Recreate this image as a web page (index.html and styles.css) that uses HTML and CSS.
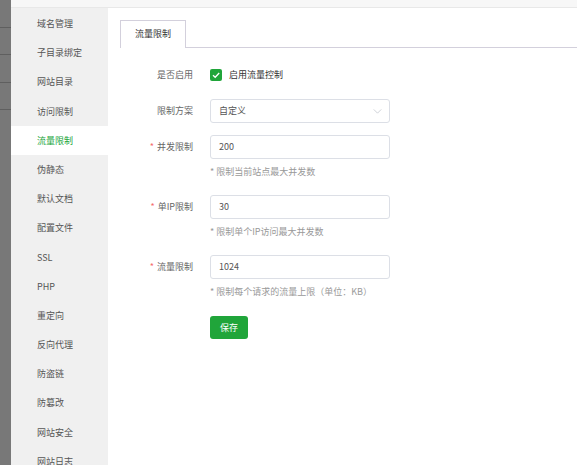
FILE: index.html
```html
<!DOCTYPE html>
<html lang="zh">
<head>
<meta charset="utf-8">
<link rel="stylesheet" href="styles.css">
</head>
<body>
<div class="app">
  <div class="strip">
    <div class="strip-cell"></div>
    <div class="strip-cell"></div>
    <div class="strip-cell"></div>
    <div class="strip-cell"></div>
  </div>
  <div class="main">
    <div class="topbar"></div>
    <div class="body">
      <ul class="sidebar">
        <li>域名管理</li>
        <li>子目录绑定</li>
        <li>网站目录</li>
        <li>访问限制</li>
        <li class="active">流量限制</li>
        <li>伪静态</li>
        <li>默认文档</li>
        <li>配置文件</li>
        <li>SSL</li>
        <li>PHP</li>
        <li>重定向</li>
        <li>反向代理</li>
        <li>防盗链</li>
        <li>防篡改</li>
        <li>网站安全</li>
        <li>网站日志</li>
      </ul>
      <div class="content">
        <div class="tabs">
          <div class="tab">流量限制</div>
        </div>
        <div class="form">
          <div class="label row-check">是否启用</div>
          <div class="field row-check">
            <span class="checkbox"><svg viewBox="0 0 12 12" width="12" height="12"><path d="M3 6.2 L5.2 8.3 L9.2 4" fill="none" stroke="#fff" stroke-width="1.3"/></svg></span>
            <span class="check-text">启用流量控制</span>
          </div>

          <div class="label row-select">限制方案</div>
          <div class="field row-select">
            <div class="select">
              <span>自定义</span>
              <svg class="chev" viewBox="0 0 10 6" width="9" height="5"><path d="M0.5 0.5 L5 5 L9.5 0.5" fill="none" stroke="#c0c4cc" stroke-width="0.9"/></svg>
            </div>
          </div>

          <div class="label row-input"><span class="star">*</span>并发限制</div>
          <div class="field">
            <div class="input">200</div>
            <div class="hint">* 限制当前站点最大并发数</div>
          </div>

          <div class="label row-input"><span class="star">*</span>单IP限制</div>
          <div class="field">
            <div class="input">30</div>
            <div class="hint">* 限制单个IP访问最大并发数</div>
          </div>

          <div class="label row-input"><span class="star">*</span>流量限制</div>
          <div class="field">
            <div class="input">1024</div>
            <div class="hint">* 限制每个请求的流量上限<span class="paren">（</span>单位<span class="colon">：</span>KB<span class="paren">）</span></div>
          </div>

          <div class="label"></div>
          <div class="field">
            <button class="save">保存</button>
          </div>
        </div>
      </div>
    </div>
  </div>
</div>
</body>
</html>
```
FILE: styles.css
```css
* { box-sizing: border-box; }
html, body {
  margin: 0;
  padding: 0;
  background: #fff;
}
body {
  font-family: "Noto Sans CJK SC", "Noto Sans", sans-serif;
  font-size: 9px;
  color: #666;
}
.app {
  display: flex;
  width: 577px;
  height: 465px;
  overflow: hidden;
}
.strip {
  width: 11px;
  flex: none;
  background: #787878;
}
.strip-cell {
  height: 27.5px;
  border-bottom: 1px solid #5f5f5f;
}
.main {
  flex: 1;
  display: flex;
  flex-direction: column;
  min-width: 0;
}
.topbar {
  height: 8px;
  flex: none;
  background: #f7f7f7;
  border-bottom: 1px solid #e8e8e8;
}
.body {
  flex: 1;
  display: flex;
  min-height: 0;
}
.sidebar {
  list-style: none;
  margin: 0;
  padding: 1px 0 0;
  width: 97px;
  flex: none;
  background: #f0f0f0;
}
.sidebar li {
  height: 29.2px;
  line-height: 29.2px;
  padding-left: 26px;
  color: #555;
  white-space: nowrap;
}
.sidebar li.active {
  background: #fff;
  color: #20a53a;
}
.content {
  flex: 1;
  padding: 12px 0 0 12px;
}
.tabs {
  display: flex;
  border-bottom: 1px solid #d3d0dc;
}
.tab {
  width: 66px;
  height: 28px;
  line-height: 26px;
  text-align: center;
  border: 1px solid #d3d0dc;
  border-bottom: none;
  color: #333;
  margin-bottom: -1px;
  background: #fff;
}
.form {
  display: grid;
  grid-template-columns: 73px 180px;
  column-gap: 17px;
  row-gap: 12px;
  padding-top: 15px;
  align-items: start;
}
.label {
  text-align: right;
  color: #666;
  white-space: nowrap;
}
.row-check { height: 24px; line-height: 24px; }
.row-select { height: 24px; line-height: 24px; }
.label.row-input { height: 24px; line-height: 24px; }
.field.row-check {
  display: flex;
  align-items: center;
}
.checkbox {
  width: 12px;
  height: 12px;
  border-radius: 2px;
  background: #20a53a;
  display: flex;
}
.check-text {
  margin-left: 7px;
  color: #333;
}
.select {
  height: 24px;
  border: 1px solid #dcdfe6;
  border-radius: 3px;
  padding: 0 8px;
  display: flex;
  align-items: center;
  justify-content: space-between;
  color: #555;
}
.select span { line-height: 22px; }
.chev { margin-right: -1px; }
.input {
  height: 24px;
  line-height: 22px;
  border: 1px solid #dcdfe6;
  border-radius: 3px;
  padding: 0 8px;
  color: #555;
}
.hint {
  margin-top: 6px;
  height: 14px;
  line-height: 14px;
  color: #999;
  margin-bottom: 4px;
  white-space: nowrap;
}
.paren, .colon {
  display: inline-block;
  width: 9px;
  text-align: center;
}
.star {
  color: #f56c6c;
  margin-right: 3px;
}
.save {
  margin-top: 1px;
  width: 38px;
  height: 23px;
  border: none;
  border-radius: 3px;
  background: #20a53a;
  color: #fff;
  font-family: inherit;
  font-size: 9px;
  padding: 0;
}
```
